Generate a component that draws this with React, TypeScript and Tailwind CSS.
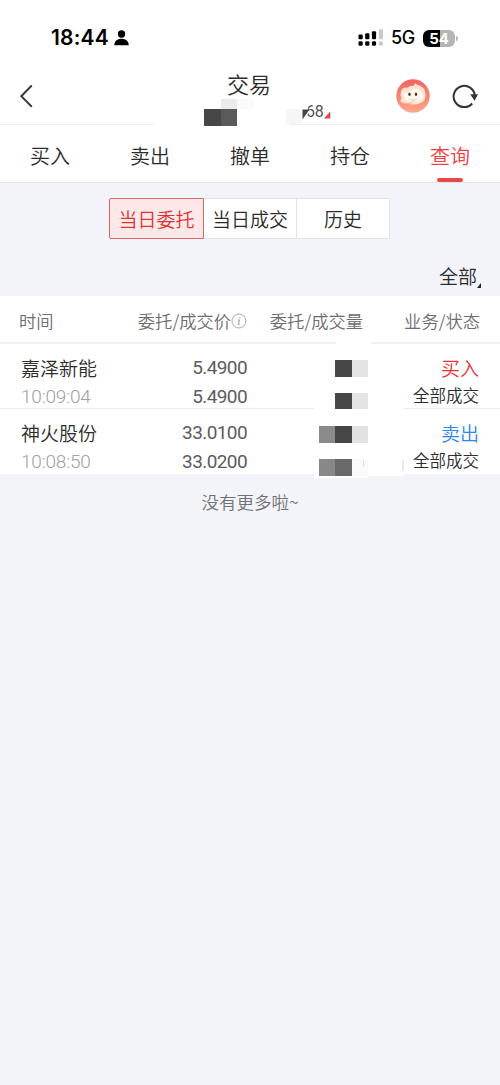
import clsx from "clsx";

const tabs = ["买入", "卖出", "撤单", "持仓", "查询"];

type Order = {
  name: string;
  time: string;
  price: string;
  dealPrice: string;
  side: "买入" | "卖出";
  status: string;
  masks: string[][];
};

const orders: Order[] = [
  {
    name: "嘉泽新能",
    time: "10:09:04",
    price: "5.4900",
    dealPrice: "5.4900",
    side: "买入",
    status: "全部成交",
    masks: [
      ["bg-white", "bg-[#464646]", "bg-[#e4e4e4]"],
      ["bg-white", "bg-[#464646]", "bg-[#e4e4e4]"],
    ],
  },
  {
    name: "神火股份",
    time: "10:08:50",
    price: "33.0100",
    dealPrice: "33.0200",
    side: "卖出",
    status: "全部成交",
    masks: [
      ["bg-[#8b8b8b]", "bg-[#464646]", "bg-[#e2e2e2]"],
      ["bg-[#888888]", "bg-[#696969]", "bg-[#fafafa]"],
    ],
  },
];

function StatusBar() {
  return (
    <div className="flex h-[70px] items-start justify-between pl-[51px] pr-[42px] pt-[26px]">
      <div className="flex h-6 items-center font-['Inter','Liberation_Sans',sans-serif] text-black">
        <span className="text-[21px] font-semibold leading-6 tracking-[0.2px]">18:44</span>
        <svg className="ml-[5px] h-4 w-[15px]" viewBox="0 0 15 16">
          <circle cx="7.5" cy="4" r="3.700" />
          <path d="M0.300 15.300C0 11.500 3.500 8.800 7.500 8.800s7.500 2.700 7.200 6.500z" />
        </svg>
      </div>
      <div className="flex h-6 items-center font-['Inter','Liberation_Sans',sans-serif] text-black">
        <svg className="h-[18px] w-[25px]" viewBox="0 0 25 18">
          <rect x="0.5" y="5.500" width="4.200" height="4.800" rx="1" />
          <rect x="7.2" y="4.300" width="4.200" height="6" rx="1" />
          <rect x="13.9" y="2.200" width="4.200" height="8.100" rx="1" />
          <rect x="20.8" y="0.300" width="4.200" height="10" rx="1" fill="#c9c9c9" />
          <rect x="0.5" y="12.300" width="4.200" height="4.400" rx="1.300" />
          <rect x="7.2" y="12.300" width="4.200" height="4.400" rx="1.300" />
          <rect x="13.9" y="12.300" width="4.200" height="4.400" rx="1.300" />
          <rect x="20.8" y="12.300" width="4.200" height="4.400" rx="1.600" fill="#c9c9c9" />
        </svg>
        <span className="ml-[8px] w-[24px] whitespace-nowrap text-[18px] font-medium leading-6 tracking-[-0.5px]">
          5G
        </span>
        <div className="ml-[8px] flex h-[17px] w-[32px] items-center justify-center rounded-[6px] bg-linear-to-r from-black from-54% to-[#b5b5b5] to-54% text-[15px] font-bold leading-none tracking-[-0.2px] text-white">
          54
        </div>
        <span className="ml-px h-[5px] w-[2px] rounded-r-full bg-[#b5b5b5]" />
      </div>
    </div>
  );
}

function Avatar() {
  return (
    <svg className="h-[34px] w-[34px]" viewBox="0 0 34 34">
      <defs>
        <linearGradient id="avatar" x1="0" y1="0" x2="0" y2="1">
          <stop offset="0" stopColor="#f2625f" />
          <stop offset="1" stopColor="#fba989" />
        </linearGradient>
      </defs>
      <circle cx="17" cy="17" r="16.700" fill="url(#avatar)" />
      <path
        d="M5 13C5 9 9 8 12 8.500C14 6 17 7.500 18.500 6C18 4.500 20 4 20.500 5.500C23 5.500 25 8 27 8.500C30 12 30 17 28.500 21C26 25 17 27 10 24.500C4 24 3 20.500 6 19.500C4.500 17.500 4 15 5 13Z"
        fill="#ffe2d3"
      />
      <path
        d="M7.500 14C13 14 16 11 20 9.500C23 12 27 13 27.500 17C27 21.500 21 23.500 15 23C9 22.500 7 19 7.500 14Z"
        fill="#fff8ed"
      />
      <path d="M12 19c2 2 8 2 10 0-1 3-8 4-10 0Z" fill="#fbc8a8" />
      <ellipse cx="13.500" cy="15.300" rx="1.200" ry="1.700" fill="#4a302c" />
      <ellipse cx="20" cy="15.300" rx="1.200" ry="1.700" fill="#4a302c" />
      <path d="M9 24.500c4 .5 7-.5 9-3" fill="none" stroke="#f9b18f" strokeWidth="1" />
    </svg>
  );
}

function NavBar() {
  return (
    <header className="relative flex h-[55px] items-start justify-between border-b border-[#eeeeee] pl-[20px] pr-[22px]">
      <svg className="mt-[14px] h-6 w-[13px]" viewBox="0 0 13 24" fill="none" stroke="#3c3c3c" strokeWidth="2">
        <path d="M11.800 1.500 1.300 12.200 11.800 22.800" />
      </svg>
      <h1 className="absolute inset-x-0 -top-px text-center text-[22px] leading-7">
        <span className="relative -left-px">交易</span>
      </h1>
      <div className="mt-[9px] flex items-center">
        <Avatar />
        <svg className="ml-[22px] h-[25px] w-[26px]" viewBox="0 0 26 25" fill="none">
          <path d="M20.200 19.500A10.600 10.600 0 1 1 22.800 11.800" stroke="#333" strokeWidth="2" />
          <path d="M18.200 10.200h7.800l-3.400 6.600z" fill="#333" />
        </svg>
      </div>

      {/* masked account number */}
      <div className="absolute left-[154px] top-[29px] h-[27px] w-[135px] bg-white" />
      <div className="absolute left-[204px] top-[29px]">
        <div className="ml-[17px] flex h-[10px]">
          <div className="w-[16px] bg-[#ebebeb]" />
          <div className="w-[17px] bg-[#fafafa]" />
        </div>
        <div className="flex h-[17px]">
          <div className="w-[17px] bg-[#464646]" />
          <div className="w-[16px] bg-[#5a5a5a]" />
        </div>
      </div>
      <div className="absolute left-[286px] top-[39px] flex h-[17px] items-start">
        <div className="h-[15px] w-[16px] bg-[#f6f6f6]" />
        <span className="-mt-[6px] ml-[4px] font-['Roboto',sans-serif] text-[16px] font-normal leading-[18px] tracking-[-0.3px] text-[#555]">
          68
        </span>
      </div>
      <svg className="absolute left-[302px] top-[37px] h-[13px] w-[30px]" viewBox="0 0 30 13">
        <path d="M0.500 0h5.500v3.500h3L1 12z" fill="#fff" />
        <path d="M0.500 2.500h7L0.500 12.500z" fill="#444" />
        <path d="M28.300 4.500v7H21.800z" fill="#e0445a" />
      </svg>
    </header>
  );
}

function Mask({ cells }: { cells: string[] }) {
  return (
    <div className="flex h-[17px]">
      {cells.map((cell, i) => (
        <div key={i} className={clsx("h-full", i === 1 ? "w-[17px]" : "w-[16px]", cell)} />
      ))}
    </div>
  );
}

function OrderRow({ order, last }: { order: Order; last: boolean }) {
  return (
    <li
      className={clsx(
        "relative grid h-[65px] grid-cols-[120px_107px_121px_111px] pl-[20px]",
        !last && "border-b border-[#ececec]"
      )}
    >
      <div className="pl-px pt-[10px]">
        <p className="text-[19px] leading-7">{order.name}</p>
        <p className="pt-px font-['Roboto',sans-serif] text-[19px] font-light leading-7 tracking-[-0.2px] text-[#a0a0a0]">
          {order.time}
        </p>
      </div>
      <div className="pt-[9px] text-right font-['Roboto',sans-serif] text-[19px] font-normal leading-[29px] tracking-[-0.600px] text-[#5c5c5c]">
        <p>{order.price}</p>
        <p>{order.dealPrice}</p>
      </div>
      <div
        className={clsx(
          "z-10 ml-[67px] flex flex-col items-end gap-[16px] bg-white",
          last ? "-mb-[2px] w-[54px] pt-[17px]" : "-mb-px w-[90px] pr-[36px] pt-[16px]"
        )}
      >
        {order.masks.map((cells, i) => (
          <Mask key={i} cells={cells} />
        ))}
      </div>
      <div className="pt-[10px] text-right">
        <p className={clsx("text-[19px] leading-7", order.side === "买入" ? "text-[#ee2f2f]" : "text-[#2f86ee]")}>
          {order.side}
        </p>
        <p className="text-[16.500px] leading-[26px]">{order.status}</p>
      </div>
      {last && (
        <div className="absolute left-[368px] top-[50px] flex h-[17px] w-[36px] justify-between bg-white">
          <span className="z-20 -ml-[5px] mt-px h-[6px] w-px bg-[#dddddd]" />
          <span className="mt-px h-[11px] w-[2px] bg-[#e8e8e8]" />
        </div>
      )}
    </li>
  );
}

export default function App() {
  return (
    <main className="h-[1085px] w-[500px] overflow-hidden bg-[#f3f4f9] font-['Noto_Sans_CJK_SC',sans-serif] font-[350] text-[#2c2c2c]">
      <div className="bg-white">
        <StatusBar />
        <NavBar />
        <nav className="grid h-[58px] grid-cols-5 border-b border-[#e3e4e8]">
          {tabs.map((tab) => (
            <div
              key={tab}
              className={clsx(
                "flex flex-col items-center justify-between pt-[16px] text-[20px] leading-[30px]",
                tab === "查询" && "text-[#ee4042]"
              )}
            >
              {tab}
              {tab === "查询" && <span className="h-[4px] w-[26px] rounded-full bg-[#e8484a]" />}
            </div>
          ))}
        </nav>
      </div>

      <div className="flex pl-[109px] pt-[15px]">
        <div className="flex h-[41px] text-[19px] leading-[41px]">
          <div className="flex w-[95px] items-center justify-center rounded-l-[2px] border border-[#e06668] bg-[#fde8e9] text-[#dc3436]">
            当日委托
          </div>
          <div className="flex w-[93px] items-center justify-center border-y border-r border-[#e2e3e6] bg-white">
            当日成交
          </div>
          <div className="flex w-[93px] items-center justify-center rounded-r-[2px] border-y border-r border-[#e2e3e6] bg-white">
            历史
          </div>
        </div>
      </div>

      <div className="flex h-[57px] items-start justify-end pr-[19px] pt-[22px] text-[19px] leading-[30px]">
        全部
        <svg className="mt-[22px] h-[5px] w-[4px]" viewBox="0 0 4 5">
          <path d="M4 0v5H0z" fill="#222" />
        </svg>
      </div>

      <section className="bg-white">
        <div className="relative flex h-[48px] items-center border-b-2 border-[#f0f0f1] pl-[19px] pt-[3px] text-[17.300px] text-[#6d6d6d]">
          <span className="w-[80px]">时间</span>
          <span className="flex w-[148px] items-center justify-end whitespace-nowrap">
            委托/成交价
            <svg className="h-4 w-4" viewBox="0 0 16 16" fill="none" stroke="#aaa">
              <circle cx="8" cy="8" r="7" />
              <path d="M8.700 4.200v1.400M7 7.200h1.400l-1 4.300h1.300" strokeWidth="1.200" />
            </svg>
          </span>
          <span className="w-[116px] text-right">委托/成交量</span>
          <span className="w-[117px] text-right">业务/状态</span>
          <div className="absolute -bottom-[2px] left-[336px] h-[2px] w-[35px] bg-white" />
        </div>
        <ul>
          {orders.map((order, i) => (
            <OrderRow key={order.name} order={order} last={i === orders.length - 1} />
          ))}
        </ul>
      </section>

      <p className="pt-[14px] text-center text-[17.500px] leading-7 text-[#707070]">没有更多啦~</p>
    </main>
  );
}
